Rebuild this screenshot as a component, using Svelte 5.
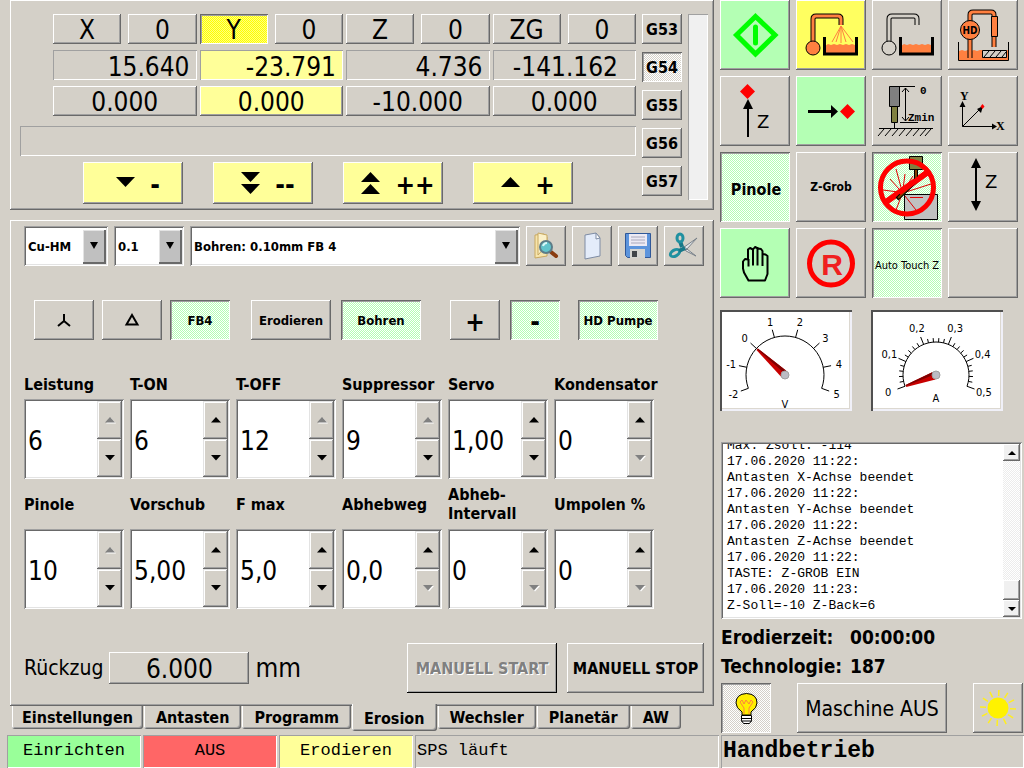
<script lang="ts">
	type Param = { id: string; label: string; value: string; up?: boolean; down?: boolean };

	const axes = [
		{ name: 'X', zero: '0', actual: '15.640', target: '0.000' },
		{ name: 'Y', zero: '0', actual: '-23.791', target: '0.000' },
		{ name: 'Z', zero: '0', actual: '4.736', target: '-10.000' },
		{ name: 'ZG', zero: '0', actual: '-141.162', target: '0.000' }
	];
	let activeAxis = $state('Y');

	const offsets = ['G53', 'G54', 'G55', 'G56', 'G57'];
	let activeOffset = $state('G54');

	const jogs = [
		{ text: '-', arrows: ['M0 5H19L9.5 15Z'] },
		{ text: '--', arrows: ['M0 0H19L9.5 10Z', 'M0 12H19L9.5 22Z'] },
		{ text: '++', arrows: ['M0 10H19L9.5 0Z', 'M0 22H19L9.5 12Z'] },
		{ text: '+', arrows: ['M0 15H19L9.5 5Z'] }
	];

	const params: Param[] = [
		{ id: 'leistung', label: 'Leistung', value: '6', up: false },
		{ id: 'ton', label: 'T-ON', value: '6' },
		{ id: 'toff', label: 'T-OFF', value: '12', up: false },
		{ id: 'suppressor', label: 'Suppressor', value: '9', up: false },
		{ id: 'servo', label: 'Servo', value: '1,00' },
		{ id: 'kondensator', label: 'Kondensator', value: '0', down: false },
		{ id: 'pinole', label: 'Pinole', value: '10', up: false },
		{ id: 'vorschub', label: 'Vorschub', value: '5,00' },
		{ id: 'fmax', label: 'F max', value: '5,0' },
		{ id: 'abhebweg', label: 'Abhebweg', value: '0,0', down: false },
		{ id: 'intervall', label: 'Abheb-Intervall', value: '0', down: false },
		{ id: 'umpolen', label: 'Umpolen %', value: '0', down: false }
	];

	const tabs = ['Einstellungen', 'Antasten', 'Programm', 'Erosion', 'Wechsler', 'Planetär', 'AW'];
	let activeTab = $state('Erosion');

	const log = [
		'Max. Zsoll: -114',
		'17.06.2020 11:22:',
		'Antasten X-Achse beendet',
		'17.06.2020 11:22:',
		'Antasten Y-Achse beendet',
		'17.06.2020 11:22:',
		'Antasten Z-Achse beendet',
		'17.06.2020 11:22:',
		'TASTE: Z-GROB EIN',
		'17.06.2020 11:23:',
		'Z-Soll=-10 Z-Back=6'
	];

	const gauges = [
		{ unit: 'V', r: 39, labelR: 55, unitY: 98, minor: 1, marks: ['-2', '-1', '0', '1', '2', '3', '4', '5'], at: 2 },
		{ unit: 'A', r: 33, labelR: 51, unitY: 92, minor: 5, marks: ['0', '0,1', '0,2', '0,3', '0,4', '0,5'], at: 0 }
	];

	// dial sweeps 220 degrees, starting 20 degrees below the left horizontal
	function polar(step: number, steps: number, r: number) {
		const a = ((200 - (220 * step) / steps) * Math.PI) / 180;
		return { x: 65 + r * Math.cos(a), y: 65 - r * Math.sin(a) };
	}

	function arc(r: number) {
		const a = polar(0, 1, r);
		const b = polar(1, 1, r);
		return `M${a.x} ${a.y}A${r} ${r} 0 1 1 ${b.x} ${b.y}`;
	}

	function ticks(steps: number, minor: number, r: number) {
		let d = '';
		for (let i = 0; i <= steps * minor; i++) {
			const a = polar(i, steps * minor, r);
			const b = polar(i, steps * minor, r + (i % minor ? 4 : 8));
			d += `M${a.x} ${a.y}L${b.x} ${b.y}`;
		}
		return d;
	}

	function needleAngle(at: number, steps: number) {
		return -20 + (220 * at) / steps;
	}
</script>

{#snippet tank()}
	<path d="M29 46l3-2 3 1 3-1 3 1 3-1 3 1 3-1 3 1 3-1 3 1v8H29z" fill="#ff8040" />
	<path d="M28.500 37v17h32V37" fill="none" stroke="#000" stroke-width="3" />
{/snippet}

<div class="page">
	<main class="left">
		<section class="panel axes-panel">
			<div class="axes-main">
				<div class="axes">
					{#each axes as axis}
						<div class="axis" class:on={axis.name === activeAxis}>
							<div class="axis-head">
								<button
									class="btn big"
									class:pressed={axis.name === activeAxis}
									onclick={() => (activeAxis = axis.name)}>{axis.name}</button
								>
								<button class="btn big">{axis.zero}</button>
							</div>
							<output class="readout">{axis.actual}</output>
							<button class="btn big target">{axis.target}</button>
						</div>
					{/each}
				</div>
				<div class="message"></div>
				<div class="jogs">
					{#each jogs as jog}
						<button class="btn jog">
							<svg width="19" height="22" viewBox="0 0 19 22" aria-hidden="true">
								{#each jog.arrows as d}<path {d} />{/each}
							</svg>
							<span>{jog.text}</span>
						</button>
					{/each}
				</div>
			</div>
			<div class="offsets">
				{#each offsets as g}
					<button class="btn" class:pressed={g === activeOffset} onclick={() => (activeOffset = g)}>{g}</button>
				{/each}
			</div>
			<div class="level"></div>
		</section>

		<section class="panel work-panel">
			<div class="toolbar">
				<div class="combo">
					<select aria-label="Material"><option>Cu-HM</option></select>
					<span></span>
				</div>
				<div class="combo">
					<select aria-label="Durchmesser"><option>0.1</option></select>
					<span></span>
				</div>
				<div class="combo">
					<select aria-label="Technologie"><option>Bohren: 0.10mm FB 4</option></select>
					<span></span>
				</div>
				<button class="btn" aria-label="Suchen">
					<svg width="40" height="40" viewBox="0 0 40 40">
						<path d="M9 9l9-1 3 3v19l-12 2z" fill="#f6e4ac" stroke="#c8a860" />
						<path d="M12 7l9 2v10l-9 10z" fill="#fbf0c8" stroke="#c8a860" />
						<path d="M25 26l5 4" stroke="#8a3c10" stroke-width="4" stroke-linecap="round" />
						<circle cx="20" cy="21" r="6" fill="#62c4cc" stroke="#5c7c88" stroke-width="2" />
						<path d="M17 20q1-3 4-3" fill="none" stroke="#d8f8f8" stroke-width="2" />
					</svg>
				</button>
				<button class="btn" aria-label="Neu">
					<svg width="40" height="40" viewBox="0 0 40 40">
						<path d="M13 9l11-2 4 5v18l-15 3z" fill="#e4ecfa" stroke="#7e8ca4" />
						<path d="M24 7v6l4-1z" fill="#fff" stroke="#7e8ca4" />
					</svg>
				</button>
				<button class="btn" aria-label="Speichern">
					<svg width="40" height="40" viewBox="0 0 40 40">
						<path d="M7.500 7.500h25v24h-23l-2-2z" fill="#5c94dc" stroke="#305898" />
						<path d="M11 8h18v12H11z" fill="#eceaf4" />
						<path d="M13 11h14M13 14h14M13 17h14" stroke="#a8a8bc" />
						<path d="M12 23h15v9H12z" fill="#d4d4d0" />
						<path d="M14 25h5v6h-5z" fill="#404448" />
					</svg>
				</button>
				<button class="btn" aria-label="Ausschneiden">
					<svg width="40" height="40" viewBox="0 0 40 40">
						<path d="M16 24L33 12l-11 12zM19 20l13 10-10-5z" fill="#e4e8ec" stroke="#788088" />
						<path d="M18 21l-2-6" stroke="#187888" stroke-width="4" />
						<ellipse cx="16" cy="12" rx="3" ry="4" fill="none" stroke="#2090a0" stroke-width="3" />
						<ellipse cx="11" cy="27" rx="5" ry="3" fill="none" stroke="#2090a0" stroke-width="3" transform="rotate(-30 11 27)" />
						<path d="M15 25l6-3" stroke="#187888" stroke-width="4" />
					</svg>
				</button>
			</div>

			<div class="modes">
				<div class="mode-group three">
					<button class="btn" aria-label="Stern">
						<svg width="14" height="14" viewBox="0 0 14 14"><path d="M7 1v7L1 13M7 8l6 5" fill="none" stroke="#000" stroke-width="2" /></svg>
					</button>
					<button class="btn" aria-label="Dreieck">
						<svg width="16" height="14" viewBox="0 0 16 14"><path d="M8 2l5.500 9.500h-11z" fill="none" stroke="#000" stroke-width="2" /></svg>
					</button>
					<button class="btn pressed green">FB4</button>
				</div>
				<div class="mode-group wide">
					<button class="btn">Erodieren</button>
					<button class="btn pressed green">Bohren</button>
				</div>
				<div class="mode-group sign">
					<button class="btn">+</button>
					<button class="btn pressed green">-</button>
				</div>
				<div class="mode-group wide pump">
					<button class="btn pressed green">HD Pumpe</button>
				</div>
			</div>

			<div class="params">
				{#each params as p, i}
					<div class="param" class:second={i > 5}>
						<label for={p.id}>{p.label}</label>
						<div class="spinner">
							<input id={p.id} value={p.value} />
							<div class="spin-buttons">
								<button disabled={p.up === false} aria-label={`${p.label} erhöhen`}>
									<svg width="10" height="6" viewBox="0 0 10 6"><path d="M0 5.500L5 0l5 5.500z" /></svg>
								</button>
								<button disabled={p.down === false} aria-label={`${p.label} verringern`}>
									<svg width="10" height="6" viewBox="0 0 10 6"><path d="M0 0h10L5 5.500z" /></svg>
								</button>
							</div>
						</div>
					</div>
				{/each}
			</div>

			<div class="retract">
				<span class="retract-label">Rückzug</span>
				<button class="btn big retract-value">6.000</button>
				<span class="unit">mm</span>
				<button class="btn manual start" disabled>MANUELL START</button>
				<button class="btn manual">MANUELL STOP</button>
			</div>
		</section>

		<nav class="tabs">
			{#each tabs as tab}
				<button class:active={tab === activeTab} onclick={() => (activeTab = tab)}>{tab}</button>
			{/each}
		</nav>
	</main>

	<aside class="right">
		<div class="keys">
			<button class="btn lit" aria-label="Start">
				<svg viewBox="0 0 70 70">
					<path d="M35.500 16.500L55 35 35.500 54 16.500 35z" fill="none" stroke="#0f0" stroke-width="5" />
					<path d="M35.500 27v16" stroke="#0f0" stroke-width="5" stroke-linecap="round" />
				</svg>
			</button>
			<button class="btn yellow" aria-label="Spülung">
				<svg viewBox="0 0 70 70">
					<path d="M17 42V19q0-3 3-3h22q3 0 3 3v6" fill="none" stroke="#000" stroke-width="5" />
					<path d="M17 42V19q0-3 3-3h22q3 0 3 3v6" fill="none" stroke="#ff8040" stroke-width="3" />
					<circle cx="17" cy="48" r="7" fill="#ff8040" stroke="#000" />
					<path d="M45 26l-9 16M45 26l-5 16M45 26v17M45 26l5 16M45 26l12 16" stroke="#ff8040" />
					{@render tank()}
				</svg>
			</button>
			<button class="btn" aria-label="Becken">
				<svg viewBox="0 0 70 70">
					<path d="M17 42V19q0-3 3-3h22q3 0 3 3v6" fill="none" stroke="#000" stroke-width="5" />
					<path d="M17 42V19q0-3 3-3h22q3 0 3 3v6" fill="none" stroke="#d4d0c8" stroke-width="3" />
					<circle cx="17" cy="48" r="7" fill="#d4d0c8" stroke="#000" />
					{@render tank()}
				</svg>
			</button>
			<button class="btn" aria-label="Hochdruck">
				<svg viewBox="0 0 70 70">
					<path d="M11 51l3-1 3 1 3-1 3 1 3-1 3 1 3-1h28v10H11z" fill="#ff8040" />
					<path d="M22 24V15q0-3 3-3h18q3 0 3 3v4M22 38v20M46 36v11" fill="none" stroke="#000" stroke-width="5" />
					<path d="M22 24V15q0-3 3-3h18q3 0 3 3v4M22 38v20M46 36v11" fill="none" stroke="#ff8040" stroke-width="3" />
					<path d="M43.500 16.500h6v20h-6z" fill="#ff8040" stroke="#000" />
					<circle cx="22" cy="30" r="9.500" fill="#ff8040" stroke="#000" />
					<text x="22" y="34" class="ico-text small" text-anchor="middle">HD</text>
					<path d="M10.500 42v18.500h50V42" fill="none" stroke="#000" />
					<path d="M34.500 50.500h24v7h-24z" fill="#d4d0c8" stroke="#000" />
					<path d="M36 57l5-6M42 57l5-6M48 57l5-6M54 57l4-5" stroke="#000" />
				</svg>
			</button>

			<button class="btn" aria-label="Z auf">
				<svg viewBox="0 0 70 70">
					<path d="M27.500 8l7.500 7.500-7.500 7.500L20 15.500z" fill="red" />
					<path d="M28 61V30" stroke="#000" stroke-width="2" />
					<path d="M28 23l5 10H23z" />
					<text x="37" y="52" class="ico-text zed">Z</text>
				</svg>
			</button>
			<button class="btn lit" aria-label="Position anfahren">
				<svg viewBox="0 0 70 70">
					<path d="M12 35.500h24" stroke="#000" stroke-width="3" />
					<path d="M35 29l7 6.500-7 6.500z" />
					<path d="M51.500 28l7.500 7.500-7.500 7.500-7.500-7.500z" fill="red" />
				</svg>
			</button>
			<button class="btn" aria-label="Z Minimum">
				<svg viewBox="0 0 70 70">
					<path d="M17.500 10.500h10v20h-10z" fill="#808080" stroke="#000" />
					<path d="M19.500 30.500h6v16h-6z" fill="#808040" stroke="#000" />
					<path d="M22.500 47v5M7 52.500h54M27 10.500h16M28 46.500h18M33.500 12v33M30 16l3.500-4 3.500 4M30 41l3.500 4 3.500-4" fill="none" stroke="#000" />
					<path d="M6 60l6-7M13 60l6-7M20 60l6-7M27 60l6-7M34 60l6-7M41 60l6-7M48 60l6-7M53 60l6-7" stroke="#000" />
					<text x="48" y="18" class="ico-text mono">0</text>
					<text x="36" y="45" class="ico-text mono">Zmin</text>
				</svg>
			</button>
			<button class="btn" aria-label="XY Achsen">
				<svg viewBox="0 0 70 70">
					<path d="M14.500 27v23.500H46M14.500 50.500L33 32" fill="none" stroke="#000" />
					<path d="M14.500 25l3 6h-6zM49 50.500l-5-3v6zM35 30l-6 3 4 4z" />
					<path d="M34.500 28l2 2.500-2 2.500-2-2.500z" fill="red" />
					<text x="12" y="24" class="ico-text serif">Y</text>
					<text x="48" y="54" class="ico-text serif">X</text>
				</svg>
			</button>

			<button class="btn pressed green pinole">Pinole</button>
			<button class="btn grob">Z-Grob</button>
			<button class="btn pressed green" aria-label="Kein Funke">
				<svg viewBox="0 0 70 70">
					<path d="M32.500 42.500h33v25h-33z" fill="#c0c0c0" stroke="#000" />
					<path d="M37.500 4.500h13v13h-13z" fill="#808040" stroke="#000" />
					<path d="M30 39L24 17M31 37l2-15M27 37l-9-10M26 40l-15-2M34 40l28-9M28 44l-12 5M29 45l-5 13M33 44l11 14M38 45.500h13M32 38l9-14" stroke="#e00000" />
					<path d="M14 50l42-30" stroke="red" stroke-width="6" />
					<path d="M44 17v12L25 47" fill="none" stroke="#000" stroke-width="4" />
					<path d="M44 18v11L26 46" fill="none" stroke="#804000" stroke-width="2" />
					<path d="M27 41l29-21" stroke="red" stroke-width="5" />
					<circle cx="35" cy="35.500" r="26.500" fill="none" stroke="red" stroke-width="5" />
				</svg>
			</button>
			<button class="btn" aria-label="Z verfahren">
				<svg viewBox="0 0 70 70">
					<path d="M28 12v42" stroke="#000" stroke-width="2" />
					<path d="M28 6l5 10H23zM28 59l5-10H23z" />
					<text x="37" y="36" class="ico-text zed">Z</text>
				</svg>
			</button>

			<button class="btn lit" aria-label="Handbetrieb">
				<svg viewBox="0 0 70 70">
					<path
						d="M28.500 52.500l-4.500-8-1-4v-7l2-2.500 3 .5v-10l2-1.500 3 1.500 2-2.500 3 1.500 3 .5 1.500 2v3l3 .5 2 1.500v18l-2.500 6.500zM28.500 31v7.500M33 21v16.500M37.500 19v18.500M42.500 23v15"
						fill="none"
						stroke="#000"
						stroke-width="2"
						stroke-linejoin="round"
					/>
				</svg>
			</button>
			<button class="btn" aria-label="Reset">
				<svg viewBox="0 0 70 70">
					<circle cx="35" cy="35.500" r="21.500" fill="none" stroke="red" stroke-width="5" />
					<text x="36" y="47" class="ico-text reset" text-anchor="middle">R</text>
				</svg>
			</button>
			<button class="btn pressed green touch">Auto Touch Z</button>
			<button class="btn" aria-label="Frei"></button>
		</div>

		<div class="gauges">
			{#each gauges as g}
				{@const steps = g.marks.length - 1}
				<svg class="gauge" viewBox="0 0 132 101" role="img" aria-label={`Anzeige ${g.unit}`}>
					<path d={arc(g.r) + ticks(steps, g.minor, g.r)} fill="none" stroke="#000" />
					{#each g.marks as mark, i}
						{@const at = polar(i, steps, g.labelR)}
						<text x={at.x} y={at.y + 4} text-anchor="middle">{mark}</text>
					{/each}
					<g transform={`rotate(${needleAngle(g.at, steps)} 65 65)`}>
						<path d={`M${66 - g.r} 64v2L63 69v-8z`} fill="#c80000" />
						<path d={`M${66 - g.r} 64v1L63 64v-3z`} fill="#800000" />
					</g>
					<circle cx="65" cy="65" r="4" fill="#bcbcc4" stroke="#a0a0a0" />
					<text x="65" y={g.unitY} text-anchor="middle">{g.unit}</text>
				</svg>
			{/each}
		</div>

		<div class="log">
			<div class="log-lines">
				{#each log as line}<div>{line}</div>{/each}
			</div>
			<div class="scroll">
				<button aria-label="Nach oben"><svg width="8" height="4" viewBox="0 0 8 4"><path d="M0 4l4-4 4 4z" /></svg></button>
				<div class="thumb"></div>
				<button aria-label="Nach unten"><svg width="8" height="4" viewBox="0 0 8 4"><path d="M0 0h8L4 4z" /></svg></button>
			</div>
		</div>

		<dl class="facts">
			<dt>Erodierzeit:</dt>
			<dd>00:00:00</dd>
			<dt>Technologie:</dt>
			<dd>187</dd>
		</dl>

		<div class="power">
			<button class="btn pressed" aria-label="Licht">
				<svg viewBox="0 0 50 50">
					<path d="M21 32v-3q-6-4-6-9 0-9 10.500-9.500Q36 11 36 20q0 5-6 9v3z" fill="#ffee00" stroke="#000" />
					<path d="M23 31v-6l-4-6 2-2 2 4 2-4 3 4 2-4 2 2-4 6v6" fill="none" stroke="#ff8040" />
					<path d="M20.500 32.500h10v5l-2 3h-6l-2-3z" fill="#fff" stroke="#000" />
					<path d="M20 35.500h11M20 38h11" stroke="#000" />
				</svg>
			</button>
			<button class="btn machine">Maschine AUS</button>
			<button class="btn" aria-label="Helligkeit">
				<svg viewBox="0 0 50 50">
					<circle cx="25" cy="25" r="10.500" fill="#fff200" />
					<g stroke="#ffee20" stroke-width="1.500">
						{#each Array(12) as _, i}
							<path d="M25 13V7" transform={`rotate(${i * 30 + 3} 25 25)`} />
						{/each}
					</g>
				</svg>
			</button>
		</div>
	</aside>

	<footer class="status">
		<div class="cell ready">Einrichten</div>
		<div class="cell off">AUS</div>
		<div class="cell erode">Erodieren</div>
		<div class="cell plc">SPS läuft</div>
		<div class="cell mode">Handbetrieb</div>
	</footer>
</div>

<style>
	:global(body) {
		margin: 0;
		background: #d4d0c8;
	}

	.page {
		--face: #d4d0c8;
		--yellow: #ffff99;
		--green: #b4ffb4;
		--raised: inset -1px -1px #696969, inset 1px 1px #fff, inset -2px -2px #a0a0a0;
		--pressed: inset 1px 1px #696969, inset -1px -1px #fff, inset 2px 2px #a0a0a0;
		--field: inset 1px 1px #a0a0a0, inset -1px -1px #fff, inset 2px 2px #696969, inset -2px -2px #e3e3e3;
		--thin: inset 1px 1px #a0a0a0, inset -1px -1px #fff;
		display: grid;
		grid-template-columns: minmax(704px, 1fr) 304px;
		grid-template-rows: 1fr auto;
		column-gap: 6px;
		min-height: 100vh;
		box-sizing: border-box;
		background: var(--face);
		color: #000;
		font-family: 'DejaVu Sans Condensed', 'DejaVu Sans', sans-serif;
	}

	.page :is(div, button, section, select, input, svg, output) {
		box-sizing: border-box;
	}

	button,
	select,
	input {
		margin: 0;
		padding: 0;
		border: 0;
		border-radius: 0;
		font: inherit;
		color: inherit;
	}

	svg {
		display: block;
		flex: none;
	}

	.btn {
		display: flex;
		align-items: center;
		justify-content: center;
		background: var(--face);
		box-shadow: var(--raised);
		font-weight: bold;
		white-space: nowrap;
	}

	.btn.big {
		padding-top: 2px;
		font-size: 26px;
		line-height: 28px;
		font-weight: normal;
	}

	.btn.pressed {
		--tint: var(--face);
		background: conic-gradient(#fff 25%, var(--tint) 0 50%, #fff 0 75%, var(--tint) 0) 0 0 / 2px 2px;
		box-shadow: var(--pressed);
	}

	.btn.pressed.green {
		--tint: var(--green);
	}

	.btn.lit {
		background: var(--green);
	}

	.btn.yellow {
		background: #ffff60;
	}

	.left {
		padding-left: 10px;
	}

	.panel {
		box-shadow: var(--raised);
	}

	.axes-panel {
		display: flex;
		gap: 6px;
		padding: 14px 6px 6px 10px;
	}

	.axes-main {
		flex: 1;
	}

	.axes {
		display: grid;
		grid-template-columns: repeat(4, 1fr);
		gap: 3px;
		margin-left: 33px;
	}

	.axis {
		display: grid;
		grid-template-rows: repeat(3, 30px);
		gap: 6px;
	}

	.axis-head {
		display: grid;
		grid-template-columns: 1fr 1fr;
		gap: 7px;
	}

	.readout {
		padding: 1px 7px 0 0;
		box-shadow: var(--thin);
		font-size: 26px;
		line-height: 32px;
		text-align: right;
	}

	.axis:last-child .readout {
		padding-right: 18px;
	}

	.axis.on .readout,
	.axis.on .target {
		background: var(--yellow);
	}

	.axis.on .pressed {
		background: conic-gradient(#ffff80 25%, #ffff00 0 50%, #ffff80 0 75%, #ffff00 0) 0 0 / 2px 2px;
	}

	.message {
		height: 30px;
		margin: 10px 0 6px;
		box-shadow: var(--thin);
	}

	.jogs {
		display: flex;
		gap: 30px;
		margin-left: 63px;
	}

	.jog {
		gap: 15px;
		width: 100px;
		height: 42px;
		padding-left: 10px;
		background: var(--yellow);
		font-size: 26px;
	}

	.jog span {
		padding-top: 3px;
	}

	.offsets {
		display: grid;
		grid-auto-rows: 30px;
		align-content: start;
		gap: 8px;
		width: 40px;
		font-size: 16px;
	}

	.level {
		width: 20px;
		height: 186px;
		background: #f0f0f0;
		box-shadow: var(--thin);
	}

	.work-panel {
		margin-top: 10px;
		padding: 6px 10px 13px 14px;
	}

	.toolbar {
		display: grid;
		grid-template-columns: 84px 70px 1fr repeat(4, 40px);
		grid-auto-rows: 40px;
		gap: 6px;
	}

	.combo {
		position: relative;
		background: #fff;
		box-shadow: var(--field);
	}

	.combo select {
		width: 100%;
		height: 100%;
		padding: 0 28px 0 4px;
		appearance: none;
		background: transparent;
		font-size: 13px;
		font-weight: bold;
	}

	.combo span {
		position: absolute;
		top: 4px;
		right: 2px;
		bottom: 2px;
		width: 23px;
		background: #c0c0c0;
		box-shadow: inset -2px -2px #696969, inset 1px 1px #e3e3e3;
		pointer-events: none;
	}

	.combo span::after {
		content: '';
		position: absolute;
		top: 12px;
		left: 7px;
		border: 4px solid transparent;
		border-top: 7px solid #000;
		border-bottom: 0;
	}

	.modes {
		display: flex;
		margin-top: 34px;
		padding-left: 10px;
		font-size: 13px;
	}

	.mode-group {
		display: grid;
		grid-auto-flow: column;
		grid-auto-rows: 40px;
		gap: 10px;
	}

	.mode-group.three {
		grid-auto-columns: 60px;
		gap: 8px;
	}

	.mode-group.wide {
		grid-auto-columns: 80px;
		margin-left: 21px;
	}

	.mode-group.sign {
		grid-auto-columns: 50px;
		margin-left: 29px;
		font-size: 26px;
	}

	.mode-group.sign .btn {
		padding-top: 4px;
	}

	.mode-group.pump {
		margin-left: 18px;
	}

	.params {
		display: grid;
		grid-template-columns: repeat(6, 100px);
		column-gap: 6px;
		margin-top: 30px;
	}

	.param label {
		display: flex;
		align-items: center;
		height: 29px;
		font-size: 16px;
		line-height: 19px;
		font-weight: bold;
	}

	.param.second label {
		height: 50px;
	}

	.spinner {
		display: grid;
		grid-template-columns: 1fr 25px;
		height: 80px;
		padding: 2px;
		background: #fff;
		box-shadow: var(--field);
	}

	.spinner input {
		width: 100%;
		min-width: 0;
		padding: 4px 0 0 2px;
		background: transparent;
		font-size: 26px;
	}

	.spin-buttons {
		display: grid;
		grid-template-rows: 1fr 1fr;
	}

	.spin-buttons button {
		display: grid;
		place-items: center;
		background: var(--face);
		box-shadow: inset -1px -1px #696969, inset 1px 1px #e3e3e3, inset -2px -2px #a0a0a0, inset 2px 2px #fff;
	}

	.spin-buttons button:disabled svg {
		fill: #808080;
		filter: drop-shadow(1px 1px #fff);
	}

	.retract {
		display: flex;
		align-items: center;
		margin-top: 34px;
		font-size: 21px;
	}

	.retract-value {
		width: 140px;
		height: 32px;
		margin: 0 6px;
	}

	.unit {
		font-size: 26px;
	}

	.manual {
		width: 137px;
		height: 50px;
		margin-left: 10px;
		font-size: 16px;
	}

	.manual.start {
		width: 150px;
		margin-left: auto;
		box-shadow: inset -1px -1px #000, inset 1px 1px #fff, inset -2px -2px #a0a0a0;
		color: #808080;
		text-shadow: 1px 1px #fff;
	}

	.tabs {
		display: flex;
		align-items: flex-start;
		gap: 1px;
		padding-left: 2px;
	}

	.tabs button {
		height: 23px;
		padding: 0 12px;
		border-radius: 0 0 3px 3px;
		background: var(--face);
		box-shadow: inset -1px -1px #696969, inset 1px 0 #fff, inset -2px -2px #a0a0a0;
		font-size: 16px;
		line-height: 20px;
		font-weight: bold;
	}

	.tabs button:first-child {
		padding: 0 10px;
	}

	.tabs button.active {
		height: 27px;
		margin-top: -2px;
		padding-top: 2px;
	}

	.keys {
		display: grid;
		grid-template-columns: repeat(4, 70px);
		grid-auto-rows: 70px;
		gap: 6px;
	}

	.keys svg {
		width: 70px;
		height: 70px;
	}

	.pinole {
		padding: 4px 0 0 2px;
		font-size: 16px;
	}

	.grob {
		font-size: 12px;
	}

	.touch {
		padding-top: 4px;
		font-size: 11px;
		font-weight: normal;
	}

	.ico-text {
		font-weight: bold;
	}

	.ico-text.small {
		font-size: 10px;
	}

	.ico-text.zed {
		font: 18px 'DejaVu Sans', sans-serif;
	}

	.ico-text.mono {
		font: bold 11px 'Liberation Mono', monospace;
	}

	.ico-text.serif {
		font: bold 12px 'Liberation Serif', serif;
	}

	.ico-text.reset {
		fill: #f02020;
		font: bold 30px 'Liberation Sans', sans-serif;
	}

	.gauges {
		display: flex;
		gap: 19px;
		margin-top: 12px;
	}

	.gauge {
		width: 132px;
		height: 101px;
		background: #fff;
		box-shadow: inset 2px 2px #505050, inset -2px -2px #f0f0f8, inset -3px -3px #dcd8d0;
		font-size: 11px;
	}

	.log {
		display: grid;
		grid-template-columns: 1fr 17px;
		height: 177px;
		margin: 31px 2px 0 1px;
		padding: 2px;
		background: #fff;
		box-shadow: var(--field);
	}

	.log-lines {
		display: flex;
		flex-direction: column;
		justify-content: flex-end;
		height: 173px;
		overflow: hidden;
		padding: 0 0 3px 4px;
		font: 13px 'Liberation Mono', monospace;
		line-height: 16px;
	}

	.log-lines div {
		flex: none;
		height: 16px;
	}

	.scroll {
		display: flex;
		flex-direction: column;
		background: conic-gradient(#fff 25%, #ececec 0 50%, #fff 0 75%, #ececec 0) 0 0 / 2px 2px;
	}

	.scroll button {
		display: grid;
		place-items: center;
		height: 17px;
		background: #f0f0f0;
		box-shadow: var(--raised);
	}

	.thumb {
		height: 20px;
		margin-top: auto;
		background: #f0f0f0;
		box-shadow: var(--raised);
	}

	.facts {
		display: grid;
		grid-template-columns: 129px 1fr;
		margin: 4px 0 0 1px;
		font-size: 19px;
		line-height: 29px;
		font-weight: bold;
	}

	.facts dd {
		margin: 0;
	}

	.power {
		display: grid;
		grid-template-columns: 50px 150px 50px;
		grid-auto-rows: 50px;
		justify-content: space-between;
		margin: 2px 1px 0;
	}

	.power svg {
		width: 50px;
		height: 50px;
	}

	.machine {
		padding-top: 2px;
		font-size: 21px;
		font-weight: normal;
	}

	.status {
		grid-column: 1 / -1;
		display: grid;
		grid-template-columns: repeat(3, 134px) 1fr 303px;
		gap: 2px;
		margin-top: 2px;
		padding-left: 7px;
		font: 17px 'Liberation Mono', monospace;
	}

	.cell {
		height: 33px;
		box-shadow: var(--thin);
		line-height: 31px;
		text-align: center;
	}

	.cell.ready {
		background: #99ff99;
	}

	.cell.off {
		background: #ff6666;
	}

	.cell.erode {
		background: var(--yellow);
	}

	.cell.plc,
	.cell.mode {
		padding-left: 2px;
		text-align: left;
	}

	.cell.mode {
		font-size: 23px;
		line-height: 33px;
		font-weight: bold;
	}
</style>
